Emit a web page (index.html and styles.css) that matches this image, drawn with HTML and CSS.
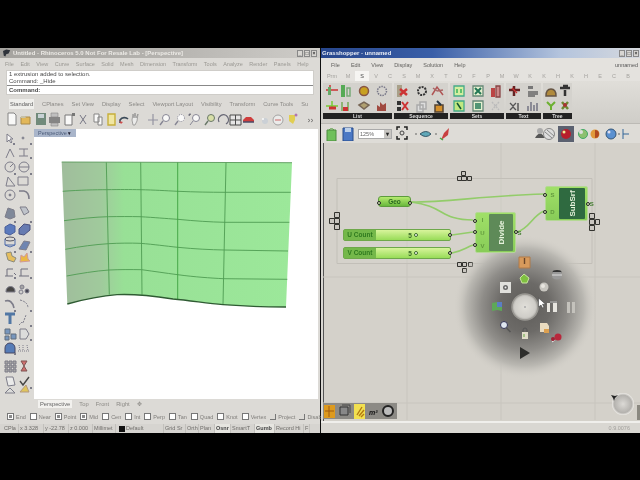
FILE: index.html
```html
<!DOCTYPE html>
<html lang="en">
<head>
<meta charset="utf-8">
<title>Rhinoceros and Grasshopper</title>
<link rel="stylesheet" href="styles.css">
</head>
<body>
<main class="desktop">
  <section class="rhino">
    <header class="rh-title">
      <svg class="rh-logo" viewBox="0 0 10 9"><path d="M0 2l4-2 5 1-2 4-3 1-1 3-2-1z" fill="#30343c"/></svg>
      <span>Untitled - Rhinoceros 5.0 Not For Resale Lab - [Perspective]</span>
      <span class="wbtns"><i>_</i><i>□</i><i>×</i></span>
    </header>
    <nav class="rh-menu">
      <span>File</span><span>Edit</span><span>View</span><span>Curve</span><span>Surface</span><span>Solid</span><span>Mesh</span><span>Dimension</span><span>Transform</span><span>Tools</span><span>Analyze</span><span>Render</span><span>Panels</span><span>Help</span>
    </nav>
    <div class="cmd">
      <div class="cmd-log">
        <div>1 extrusion added to selection.</div>
        <div>Command: _Hide</div>
      </div>
      <div class="cmd-line">Command:</div>
    </div>
    <div class="rh-tabs">
      <span class="on">Standard</span><span>CPlanes</span><span>Set View</span><span>Display</span><span>Select</span><span>Viewport Layout</span><span>Visibility</span><span>Transform</span><span>Curve Tools</span><span>Su</span>
    </div>
    <svg class="rh-tools" viewBox="0 0 320 19">
      <path d="M8 3h6l2 2v10H8z" fill="#fff" stroke="#777"/>
      <path d="M21 7h9v7h-9z" fill="#e4b244" stroke="#a07c30"/><path d="M21 6h4l1 2h-5z" fill="#c3bda0"/>
      <path d="M36 3h10v12H36z" fill="#5f7d6c"/><path d="M38 4h6v4h-6z" fill="#c4d0d4"/>
      <path d="M49 7h11v6H49z" fill="#777"/><path d="M51 3h7v4h-7zM51 13h7v3h-7z" fill="#bbb" stroke="#777" stroke-width=".6"/>
      <path d="M65 5h7v10h-7z" fill="#fff" stroke="#666"/><path d="M72 3h3v3h-3z" fill="#666"/>
      <path d="M80 5l6 9M86 5l-6 9" stroke="#667" fill="none"/>
      <path d="M94 4h5v8h-5zM98 7h4v8h-4z" fill="#fff" stroke="#777"/>
      <path d="M108 4h7v11h-7z" fill="#f4e99a" stroke="#c4a820" stroke-width="1.4"/>
      <path d="M120 13v-3c2-3 6-3 8-1" stroke="#234" stroke-width="1.6" fill="none"/><path d="M119 11l2 3 2-2z" fill="#c33"/>
      <path d="M132 10l1-6 1 4 1-5 1 5 2-4-1 7-2 4h-2z" fill="#eee" stroke="#777" stroke-width=".7"/>
      <path d="M153 4v11M148 10h10" stroke="#889" stroke-width="1.2"/>
      <circle cx="166" cy="8" r="3.5" fill="#fff" stroke="#778"/><path d="M163 11l-3 4" stroke="#778" stroke-width="1.4"/>
      <circle cx="181" cy="8" r="3.5" fill="#fff" stroke="#778" stroke-dasharray="1 1"/><path d="M178 11l-3 4" stroke="#778" stroke-width="1.4"/>
      <circle cx="196" cy="8" r="3.5" fill="#fff" stroke="#778"/><path d="M193 11l-3 4M191 4h-2v2" stroke="#778"/>
      <circle cx="211" cy="8" r="3.5" fill="#d8e0a0" stroke="#565"/><path d="M208 11l-3 4" stroke="#565" stroke-width="1.4"/>
      <path d="M219 12a5 5 0 1 1 7 2" stroke="#556" fill="none" stroke-width="1.3"/>
      <path d="M230 5h11v10h-11zM230 10h11M235.500 5v10" fill="#e8e8e8" stroke="#333"/>
      <path d="M243 10l3-3h5l3 3v2h-11z" fill="#c22"/><path d="M243 12h11" stroke="#335" stroke-width="1.500"/>
      <circle cx="265" cy="11" r="3" fill="#c9cfd6"/><circle cx="263" cy="9" r="1" fill="#fff"/>
      <circle cx="278" cy="10" r="5" fill="#eee" stroke="#999"/><path d="M275 10h6" stroke="#c55"/>
      <path d="M289 5h6v5l-2 4-4-3z" fill="#e2cc3c"/><circle cx="296" cy="5" r="1.500" fill="#a6a"/>
      <path d="M308 9l2 1.500-2 1.500M311 9l2 1.500-2 1.500" stroke="#444" fill="none" stroke-width=".7"/>
    </svg>
    <div class="rh-work">
      <svg class="rh-side" viewBox="0 0 34 270" aria-hidden="true">
        <g fill="none" stroke="#667" stroke-width="1">
          <path d="M7 5v8l2-2 2 3 1-1-2-3h3z" fill="#fff"/><circle cx="23" cy="9" r="1" fill="#889"/>
          <path d="M6 29l4-9 4 8" /><path d="M19 27h9M19 20h9M24 20v7"/>
          <circle cx="10" cy="38" r="5"/><path d="M10 38l3-3"/><circle cx="24" cy="38" r="5"/><path d="M19 38h10"/>
          <path d="M6 57l2-9 7 9z"/><path d="M18 48h10v8H18z"/>
          <circle cx="10" cy="66" r="5"/><circle cx="10" cy="66" r="1" fill="#667"/><path d="M19 62h5q5 1 5 8" stroke-width="1.600"/>
          <path d="M5 88l3-9 6 2 1 7-5 2z" fill="#68748a"/><path d="M20 78l6 0 3 5-5 3z" fill="#b8bec8"/>
          <path d="M5 98l5-3 5 2v6l-5 3-5-2z" fill="#3b63b8" stroke="#26408a"/><path d="M19 100l5-5 6 1v5l-6 5-5-1z" fill="#4a64a8" stroke="#26306a"/>
          <ellipse cx="10" cy="110" rx="5" ry="2" stroke="#334" /><path d="M5 110v6h10v-6M5 116l5 2 5-2" stroke="#2c50a0"/><path d="M19 120l5-8 6 1-4 8z" fill="#5570a8"/>
          <path d="M6 124l5-1 1 4 4 2-2 4-6-2z" fill="#e8b840" stroke="#776"/><path d="M20 133l1-7 3 2 3-4 1 6 2 2z" fill="#eeb020" stroke="#c88"/>
          <path d="M7 147v-7h6M5 147h8M14 144l2 2" stroke="#556"/><path d="M21 147v-7h7M19 147h10" stroke="#556"/>
          <path d="M6 162a4 4 0 0 1 9 0v1h-9z" fill="#222"/><circle cx="22" cy="158" r="2" fill="#999"/><circle cx="27" cy="162" r="2" fill="#223"/><circle cx="21" cy="163" r="2" fill="#ccc"/>
          <path d="M5 172q7-2 9 7" stroke-width="1.600"/><path d="M20 171q8 2 8 8" stroke-dasharray="2 1"/>
          <path d="M5 185h10M10 185v10" stroke="#2f5f98" stroke-width="3"/><path d="M19 196l3-3 1 1 3-8" stroke-dasharray="2 1"/>
          <path d="M5 200h5v5H5zM11 205h5v5h-5zM5 207h4v4H5z" fill="#5e86b8" stroke="#456"/><path d="M20 200h6l3 5-3 5h-6z" fill="#ddd"/>
          <path d="M5 219a5 5 0 0 1 10 0v5H5z" fill="#3565b0" stroke="#224"/><path d="M19 216l1 6M23 216v6M27 216l1 6M18 222h11" stroke-dasharray="1 1"/>
          <path d="M5 232h3v3H5zM9 232h3v3H9zM13 232h3v3h-3zM5 236h3v3H5zM9 236h3v3H9zM13 236h3v3h-3zM5 240h3v3H5zM9 240h3v3H9zM13 240h3v3h-3z" fill="#999"/><path d="M21 232h6l-6 10h6z" fill="#c55" stroke="#633"/>
          <path d="M6 248h7l2 8-7 1z" fill="#eee"/><path d="M20 252l3 4 6-8" stroke="#222" stroke-width="1.400"/>
          <path d="M5 264l5-5 5 5z" fill="#ddd"/><path d="M20 263l6-7 3 7z" fill="#e0c040" stroke="#a86"/>
        </g>
        <g fill="#667"><path d="M13 14h2v2h-2zM30 14h2v2h-2zM30 28h2v2h-2zM14 44h2v2h-2zM30 44h2v2h-2zM14 92h2v2h-2zM30 92h2v2h-2zM14 122h2v2h-2zM30 122h2v2h-2zM14 148h2v2h-2zM30 148h2v2h-2zM14 181h2v2h-2zM30 181h2v2h-2zM30 196h2v2h-2zM30 210h2v2h-2zM14 224h2v2h-2zM30 258h2v2h-2z"/></g>
      </svg>
      <div class="vp">
        <div class="vp-label">Perspective <b>▾</b></div>
        <svg class="surface" viewBox="34 127 284 270" aria-label="NURBS surface">
          <defs>
            <linearGradient id="sf" x1="0" x2="1" y1="0" y2="0">
              <stop offset="0" stop-color="#a0bd9c"/><stop offset=".17" stop-color="#a0ca9c"/><stop offset=".27" stop-color="#98e096"/><stop offset="1" stop-color="#9ce89a"/>
            </linearGradient>
          </defs>
          <path d="M61.700 160L292 160.700L286 305C258 305 240 304 223 302.700C205 301 190 298.500 173 297C150 293.500 130 292 117 292.700C100 294 82 298 67.300 302Z" fill="url(#sf)"/>
          <g fill="none" stroke="#4f9c52" stroke-width=".9">
            <path d="M62.700 189.300C80 188 95 187.700 106.700 187.700C120 187.500 130 187.500 140 187.700C155 188 165 188.700 177.700 189.300C195 190 210 190.300 225 190.300L290.700 190.300"/>
            <path d="M64 218.700C80 216.500 95 215 108.300 214.700C120 214.500 130 214.500 140 214.700C155 215.500 165 216.500 177.700 217.300C195 219 210 220 225 220.300L289.300 220.300"/>
            <path d="M65.300 247.300C80 244.500 95 242.500 108.300 241.700C120 241 130 241 140 241.300C155 242.500 165 244 177.700 245.300C195 247 210 247.700 224.300 248L288 249"/>
            <path d="M66.700 274C80 271.500 95 269 109 268C120 267.500 130 267.500 141.700 267.700C155 269.500 165 271 177.700 272.700C195 275 210 276 223.300 276.700L287.300 277.300"/>
            <path d="M106.300 160.300L109.300 292.500"/><path d="M140.700 160.300L142 292.700"/><path d="M177.700 160.300V297" stroke="#3da03f"/><path d="M226 160.500L223 302.700"/>
            <path d="M61.700 160L292 160.700" stroke="#5b9a5c"/>
          </g>
          <path d="M286 305C258 305 240 304 223 302.700C205 301 190 298.500 173 297C150 293.500 130 292 117 292.700C100 294 82 298 67.300 302" fill="none" stroke="#2f5b33" stroke-width="1.300"/>
        </svg>
      </div>
    </div>
    <div class="vp-tabs">
      <span class="on">Perspective</span><span>Top</span><span>Front</span><span>Right</span><span>✥</span>
    </div>
    <div class="osnap">
      <label class="ck on">End</label><label class="ck">Near</label><label class="ck on">Point</label><label class="ck on">Mid</label><label class="ck">Cen</label><label class="ck">Int</label><label class="ck">Perp</label><label class="ck">Tan</label><label class="ck">Quad</label><label class="ck">Knot</label><label class="ck">Vertex</label><label class="ck sk">Project</label><label class="ck sk">Disable</label>
    </div>
    <footer class="rh-status">
      <span class="c1">CPla</span><span class="c2">x 3.328</span><span class="c3">y -22.78</span><span class="c4">z 0.000</span><span class="c5">Millimet</span><span class="c6"><i></i>Default</span>
      <span class="c7">Grid Sr</span><span class="c8">Orth</span><span class="c9">Plan</span><span class="c10 act">Osnr</span><span class="c11">SmartT</span><span class="c12 act">Gumb</span><span class="c13">Record Hi</span><span class="c14">F</span>
    </footer>
  </section>

  <section class="gh">
    <header class="gh-title">
      <span>Grasshopper - unnamed</span>
      <span class="wbtns"><i>_</i><i>□</i><i>×</i></span>
    </header>
    <nav class="gh-menu">
      <span>File</span><span>Edit</span><span>View</span><span>Display</span><span>Solution</span><span>Help</span><em>unnamed</em>
    </nav>
    <div class="gh-tabs">
      <span>Prm</span><span>M</span><span class="on">S</span><span>V</span><span>C</span><span>S</span><span>M</span><span>X</span><span>T</span><span>D</span><span>F</span><span>P</span><span>M</span><span>W</span><span>K</span><span>K</span><span>H</span><span>K</span><span>H</span><span>E</span><span>C</span><span>B</span>
    </div>
    <div class="ribbon">
      <div class="rgroup g-list">
        <svg viewBox="0 0 69 30"><g stroke-width="1.500" fill="none">
          <path d="M3 7h12M7 2v10" stroke="#c33"/><path d="M5 4h3v8H5z" fill="#6a6"/><path d="M18 2h4v12h-4z" fill="#5a5"/><path d="M24 5h3v8h-3z" stroke="#7a7"/>
          <circle cx="41" cy="8" r="4.500" fill="#c8a020" stroke="#854"/><circle cx="59" cy="8" r="4.500" stroke="#778" stroke-dasharray="1.500 1"/>
          <path d="M3 23h12M9 18v6" stroke="#7c3"/><path d="M6 25h7" stroke="#c33" stroke-width="3"/><path d="M19 19v9M25 19v9" stroke="#7a5"/><path d="M20 24h5v4h-5z" fill="#c33"/>
          <path d="M36 22l5-3 5 3-5 4z" fill="#b0a070" stroke="#765"/><path d="M54 28v-6l3 2v-5l3 3 3-2v8z" fill="#a04a40"/>
        </g></svg>
        <div class="rlabel">List</div>
      </div>
      <div class="rgroup g-seq">
        <svg viewBox="0 0 54 30"><g stroke-width="1.500" fill="none">
          <path d="M3 2h5v12H3z" fill="#a8a088"/><path d="M6 6l7 6M13 6l-7 6" stroke="#c33" stroke-width="2.500"/>
          <circle cx="28" cy="8" r="4" stroke="#333" stroke-width="2" stroke-dasharray="2 1"/><path d="M38 12l5-8 6 8" stroke="#b05555"/><path d="M43 8l-4-3M43 8l6-1" stroke="#a66"/>
          <path d="M3 18h4v4H3zM3 24h4v4H3z" fill="#333"/><path d="M8 19l6 8M14 19l-6 8" stroke="#c33" stroke-width="2"/>
          <path d="M23 22h6v7h-6zM26 19h6v7h-6z" stroke="#aaa" fill="#ddd"/><path d="M41 22h8v7h-8z" fill="#d4902c" stroke="#543"/><path d="M43 18l4 4" stroke="#234" stroke-width="2"/>
        </g></svg>
        <div class="rlabel">Sequence</div>
      </div>
      <div class="rgroup g-sets">
        <svg viewBox="0 0 54 30"><g stroke-width="1.300" fill="none">
          <path d="M4 3h10v10H4z" fill="#d4eea0" stroke="#4a8"/><path d="M7 6v4M11 6v4" stroke="#2a5"/>
          <path d="M23 3h10v10H23z" fill="#e6f0d0" stroke="#687"/><path d="M25 5l6 6M31 5l-6 6" stroke="#275" stroke-width="2"/>
          <path d="M41 5h4v9h-4z" fill="#b44"/><path d="M46 3h4v11h-4z" fill="#c88" stroke="#844"/>
          <path d="M4 18h10v10H4z" fill="#c0e880" stroke="#4a8"/><path d="M7 20l4 6" stroke="#153" stroke-width="1.500"/>
          <path d="M23 18h10v10H23z" fill="#e6f0d0" stroke="#687"/><path d="M25 21h6M25 23h6M25 25h6" stroke="#275"/>
          <path d="M42 19l7 8M49 19l-7 8" stroke="#bbb" stroke-dasharray="2 1"/>
        </g></svg>
        <div class="rlabel">Sets</div>
      </div>
      <div class="rgroup g-text">
        <svg viewBox="0 0 35 30"><g stroke-width="1.300" fill="none">
          <path d="M8 3v10M3 7h11" stroke="#622" stroke-width="2.500"/><path d="M6 5l5 5" stroke="#c33"/>
          <path d="M22 3h5v3h-5z" fill="#777"/><path d="M22 9h10M22 11h10M22 13h7" stroke="#666"/>
          <path d="M4 20l3 3 3-3M4 27l3-3 3 3" stroke="#555"/><path d="M12 20v8" stroke="#444"/>
          <path d="M22 28v-5M25 28v-9M28 28v-6M31 28v-8" stroke="#667"/>
        </g></svg>
        <div class="rlabel">Text</div>
      </div>
      <div class="rgroup g-tree">
        <svg viewBox="0 0 29 30"><g stroke-width="1.500" fill="none">
          <path d="M3 13q0-7 5-7 5 0 5 7z" fill="#b08a3c" stroke="#654"/><path d="M17 5h10M20 3h5M22 7v6" stroke="#333" stroke-width="2.500"/>
          <path d="M8 27v-5M4 19l4 4 4-4" stroke="#6cb030" stroke-width="2"/><path d="M19 19l6 7M25 19l-6 7" stroke="#6a8a30" stroke-width="2.500"/><circle cx="22" cy="22" r="2" fill="#a33"/>
        </g></svg>
        <div class="rlabel">Tree</div>
      </div>
    </div>
    <div class="gh-tools">
      <svg class="t-left" viewBox="0 0 34 14"><path d="M1 3h9v11H1z" fill="#6fc05a" stroke="#4c8c3e"/><path d="M3 3a3 3 0 0 1 5 0" stroke="#5aa044" fill="none"/><path d="M17 1h10v13H17z" fill="#4b78c4" stroke="#284c8c"/><path d="M19 1h6v4h-6z" fill="#bcd0ea"/></svg>
      <div class="zoombox"><span>125%</span><b>▾</b></div>
      <svg class="t-mid" viewBox="0 0 60 16"><path d="M2 4V1h3M9 1h3v3M12 10v3H9M5 13H2v-3" stroke="#222" fill="none" stroke-width="1.500"/><circle cx="7" cy="7" r="2" stroke="#444" fill="none"/><circle cx="21" cy="8" r=".8" fill="#555"/><path d="M25 8q6-5 11 0-5 5-11 0z" fill="#60a8b8" stroke="#356"/><circle cx="41" cy="8" r=".8" fill="#555"/><path d="M46 14l3-7 5-5-1 7-4 3z" fill="#c84040"/><path d="M45 12l3 2" stroke="#4a4" stroke-width="1.500"/></svg>
      <svg class="t-right" viewBox="0 0 97 16"><path d="M2 12q5-9 10 0z" fill="#555"/><circle cx="7" cy="5" r="3" fill="#aaa"/><circle cx="16" cy="8" r="5.500" fill="#ddd" stroke="#888"/><path d="M12 6l7 6M14 4l7 6" stroke="#888"/><path d="M25 0h16v16H25z" fill="#5b6170"/><circle cx="33" cy="8" r="5" fill="#b81e2c"/><circle cx="31" cy="6" r="1.500" fill="#ee9"/><circle cx="50" cy="8" r="4.500" fill="#8cc070" stroke="#4a6"/><circle cx="48" cy="6" r="2" fill="#ddd"/><circle cx="62" cy="8" r="4.500" fill="#e09a3c"/><path d="M62 4a4 4 0 0 1 0 8z" fill="#b04a20"/><circle cx="78" cy="8" r="5" fill="#5a90d0" stroke="#357"/><circle cx="76" cy="6" r="1.500" fill="#dde"/><circle cx="86" cy="8" r=".8" fill="#555"/><path d="M90 3v10M90 8h6" stroke="#369"/></svg>
    </div>
    <div class="canvas">
      <svg class="layer" viewBox="323 143 317 277" aria-hidden="true">
        <defs>
          <radialGradient id="halo">
            <stop offset="0" stop-color="#5e5c59"/><stop offset=".35" stop-color="#6c6a67"/><stop offset=".6" stop-color="#8f8d89"/><stop offset=".82" stop-color="#bab8b2"/><stop offset="1" stop-color="#d4d1ca" stop-opacity="0"/>
          </radialGradient>
          <radialGradient id="disc"><stop offset="0" stop-color="#e2e0da"/><stop offset=".8" stop-color="#cfcdc8"/><stop offset="1" stop-color="#aaa8a3"/></radialGradient>
          <radialGradient id="dial"><stop offset="0" stop-color="#dcdad6"/><stop offset=".8" stop-color="#b4b2ae"/><stop offset="1" stop-color="#eeece8"/></radialGradient>
        </defs>
        <path d="M407 143V420M501 143V420M595 143V420M323 277H640M323 403H640" stroke="#c8c5be" fill="none"/>
        <path d="M337 178.500H592V263.500H337z" stroke="#c2bfb8" fill="#d8d5ce" fill-opacity=".4"/>
        <g fill="none" stroke="#8ccc60" stroke-width="1.700" opacity=".9">
          <path d="M411 202C450 202 480 196 544 194"/>
          <path d="M411 202C445 206 440 220 473 220"/>
          <path d="M452 235L473 232"/>
          <path d="M452 253C462 251 465 248 473 245"/>
          <path d="M517 232C530 228 532 216 544 211"/>
        </g>
        <g fill="#c9c6c0" stroke="#33332f" stroke-width="1">
          <path d="M461.500 171.500h4v4h-4zM457.500 176.500h4v4h-4zM461.500 176.500h5v4h-5zM467.500 176.500h4v4h-4z"/>
          <path d="M329.500 218.500h5v5h-5zM334.500 212.500h5v5h-5zM334.500 218.500h5v5h-5zM334.500 224.500h5v5h-5z"/>
          <path d="M589.500 213.500h5v5h-5zM589.500 219.500h5v5h-5zM589.500 225.500h5v5h-5zM595.500 219.500h4v5h-4z"/>
          <path d="M457.500 262.500h4v4h-4zM462.500 262.500h4v4h-4zM468.500 262.500h4v4h-4zM462.500 268.500h4v4h-4z"/>
        </g>
        <circle cx="525" cy="307" r="72" fill="url(#halo)"/>
        <circle cx="525" cy="307" r="13" fill="url(#disc)" stroke="#9a9893" stroke-width="1.500"/>
        <circle cx="525" cy="307" r="1" fill="#aaa"/>
        <path d="M519 257h11v11h-11z" fill="#d79a5c" stroke="#b07a48"/><path d="M524.500 258v6" stroke="#68452a" stroke-width="1.400"/>
        <path d="M520 278l4-4 5 4-2 5-5 0z" fill="#7fc040" stroke="#c8e4a0"/>
        <ellipse cx="557" cy="272" rx="4.500" ry="2" fill="#333"/><path d="M552.500 272v6q4.500 3 9 0v-6" fill="#999"/><path d="M552 275h10" stroke="#ddd"/>
        <circle cx="544" cy="287" r="4.500" fill="#c8c6c0"/><circle cx="543" cy="286" r="2" fill="#e8e6e0"/>
        <path d="M500 282h11v11h-11z" fill="#e0e0dc"/><circle cx="505.500" cy="287.500" r="2.500" fill="#666"/><circle cx="505.500" cy="287.500" r="1" fill="#eee"/>
        <path d="M492 303l5-1 5 2v7l-5-1-5 1z" fill="#5ea858"/><path d="M497 302h5v5h-5z" fill="#5b7ec4"/>
        <path d="M547 303h3v9h-3zM553 303h4v9h-4z" fill="#e8e6e0"/><path d="M550 302h7" stroke="#bbb"/>
        <path d="M567 302h3v11h-3zM572 302h3v11h-3z" fill="#c4c2bc"/>
        <path d="M538.500 298v9l2.500-2 1.500 3 1.500-.8-1.500-3h3z" fill="#fff" stroke="#333" stroke-width=".5"/>
        <circle cx="504" cy="325" r="3.500" fill="#dfe6ef" stroke="#335"/><path d="M506.500 328l4 4" stroke="#555" stroke-width="1.600"/>
        <path d="M522 332h6v7h-6z" fill="#e0dcc8"/><path d="M523 332v-2a2 2 0 0 1 4 0v2" stroke="#555" fill="none"/><path d="M524 334v3" stroke="#6a4"/>
        <path d="M540 323h7l2 3v6h-9z" fill="#eadcc0"/><path d="M544 329h5v4h-5z" fill="#dca050"/>
        <circle cx="558" cy="337" r="3.500" fill="#b8283c"/><path d="M555 340l-3 2" stroke="#eee"/><circle cx="553" cy="339" r="2" fill="#a02234"/>
        <path d="M520 347l10 6-10 6z" fill="#2e2e2c"/>
        <circle cx="623" cy="404" r="11" fill="url(#dial)"/><path d="M611 395l4 1 3-1-3 3-1 3-1-3z" fill="#222"/>
        <path d="M637 405h3v15h-3z" fill="#8a8880"/>
      </svg>
      <div class="node geo"><span class="pin pl"></span><b>Geo</b><span class="pin pr"></span></div>
      <div class="slider s-u"><b>U Count</b><span>5 <i></i></span><span class="pin pr"></span></div>
      <div class="slider s-v"><b>V Count</b><span>5 <i></i></span><span class="pin pr"></span></div>
      <div class="comp c-div">
        <div class="ports"><span>I</span><span>U</span><span>V</span></div>
        <div class="cname"><span>Divide</span></div>
        <div class="ports right"><span>S</span></div>
        <span class="pin p-i"></span><span class="pin p-u"></span><span class="pin p-v"></span><span class="pin p-s"></span>
      </div>
      <div class="comp c-sub">
        <div class="ports"><span>S</span><span>D</span></div>
        <div class="cname dark"><span>SubSrf</span></div>
        <div class="ports right"><span>S</span></div>
        <span class="pin p-a"></span><span class="pin p-b"></span><span class="pin p-s"></span>
      </div>
      <div class="widgets">
        <svg viewBox="0 0 73 16"><path d="M1 2h11v13H1z" fill="#dd9a1e"/><path d="M6 3v11M2 8h9" stroke="#a05a10"/><path d="M17 4h8v8h-8z" fill="#888" stroke="#333"/><path d="M19 2h8v8" fill="none" stroke="#444"/><path d="M31 1h11v15H31z" fill="#f2e050"/><path d="M34 12l5-8M36 13l5-6M38 14l3-3" stroke="#b47a10" stroke-width="1.400"/><text x="46" y="12" class="m2">m²</text><circle cx="65" cy="8" r="5" fill="#bbb" stroke="#222" stroke-width="2"/></svg>
      </div>
    </div>
    <footer class="gh-status"><span>0.9.0076</span></footer>
  </section>
</main>
</body>
</html>
```
FILE: styles.css
```css
* { box-sizing: border-box; }
html, body { margin: 0; height: 100%; background: #000; overflow: hidden; }
body { font-family: "Liberation Sans", Arial, sans-serif; color: #555; }
svg { display: block; }

.desktop {
  width: 640px;
  height: 385px;
  margin-top: 48px;
  display: flex;
  gap: 1px;
  background: #111;
  filter: blur(.6px);
}

/* Rhino window */
.rhino {
  width: 320px;
  flex: none;
  display: flex;
  flex-direction: column;
  background: #dcdad6;
}
.rh-title {
  height: 10px;
  flex: none;
  display: flex;
  align-items: center;
  gap: 2px;
  padding: 0 3px;
  background: linear-gradient(90deg, #a5a39f, #b4b2ae 50%, #cfcdc9);
  color: #eceae6;
  font-size: 6px;
  font-weight: bold;
  white-space: nowrap;
}
.rh-logo { width: 8px; height: 8px; }
.wbtns { margin-left: auto; display: flex; gap: 1px; }
.wbtns i {
  width: 6px;
  height: 7px;
  background: #d8d6d2;
  border: 1px solid #888;
  color: #333;
  font: bold 5px/5px "Liberation Sans", sans-serif;
  text-align: center;
}
.rh-menu {
  height: 12px;
  flex: none;
  display: flex;
  align-items: center;
  gap: 6.500px;
  padding: 0 5px;
  font-size: 5.500px;
  color: #9a9893;
  white-space: nowrap;
}
.cmd {
  height: 25px;
  flex: none;
  margin: 0 6px;
  background: #fff;
  font-size: 6px;
  color: #4a4a4a;
  border: 1px solid #cfcdc9;
}
.cmd-log { height: 14px; padding: 0 2px; line-height: 7px; }
.cmd-line { height: 9px; padding: 0 2px; line-height: 9px; border-top: 1px solid #888; font-weight: bold; }
.rh-tabs {
  height: 13px;
  flex: none;
  margin-top: 2px;
  display: flex;
  align-items: center;
  gap: 8px;
  padding: 0 9px;
  font-size: 5.700px;
  color: #8b8986;
  white-space: nowrap;
  overflow: hidden;
}
.rh-tabs .on { color: #5d5d5d; background: #efefec; padding: 2px 1px; }
.rh-tools { width: 320px; height: 19px; flex: none; opacity: .85; }
.rh-work { flex: 1; min-height: 0; display: flex; }
.rh-side { width: 34px; height: 270px; flex: none; opacity: .8; }
.vp { width: 284px; height: 270px; flex: none; background: #fff; position: relative; }
.vp-label {
  position: absolute;
  left: 0;
  top: 0;
  width: 42px;
  height: 8px;
  background: #a9b5ca;
  color: #4a5a78;
  font-size: 5.500px;
  line-height: 8px;
  padding-left: 4px;
  white-space: nowrap;
}
.vp-label b { color: #223; font-size: 5px; }
.surface { width: 284px; height: 270px; }
.vp-tabs {
  height: 11px;
  flex: none;
  display: flex;
  align-items: center;
  gap: 7px;
  padding-left: 38px;
  font-size: 5.800px;
  color: #8c8a86;
}
.vp-tabs .on { background: #f2f1ee; color: #666; padding: 1px 2px; }
.osnap {
  height: 15px;
  flex: none;
  display: flex;
  align-items: center;
  gap: 4px;
  padding-left: 7px;
  font-size: 5.500px;
  color: #7f7d7a;
  white-space: nowrap;
}
.ck { display: flex; align-items: center; gap: 2px; }
.ck::before {
  content: "";
  width: 5px;
  height: 5px;
  background: #fff;
  border: 1px solid #777;
}
.ck.on::before { background: #8a8a8a; box-shadow: inset 0 0 0 1px #fff; }
.ck.sk::before { background: transparent; border-width: 0 1px 1px 0; }
.rh-status {
  height: 9px;
  flex: none;
  display: flex;
  font-size: 5.500px;
  line-height: 9px;
  color: #6f6d6a;
  white-space: nowrap;
  padding-left: 3px;
  background: #d6d4d0;
}
.rh-status span { flex: none; padding-left: 1px; border-right: 1px solid #c2c0bc; }
.c1 { width: 16px; } .c2 { width: 25px; } .c3 { width: 25px; } .c4 { width: 24px; } .c5 { width: 23px; }
.c6 { width: 48px; display: flex; align-items: center; gap: 1px; }
.c6 i { width: 6px; height: 6px; background: #111; margin-left: 2px; }
.c7 { width: 22px; } .c8 { width: 13px; } .c9 { width: 16px; } .c10 { width: 16px; } .c11 { width: 24px; } .c12 { width: 20px; } .c13 { width: 29px; } .c14 { width: 6px; }
.rh-status .act { background: #e6e5e0; color: #444; font-weight: bold; }

/* Grasshopper window */
.gh {
  flex: 1;
  min-width: 0;
  display: flex;
  flex-direction: column;
  background: #d9d7d2;
}
.gh-title {
  height: 10px;
  flex: none;
  display: flex;
  align-items: center;
  padding: 0 1px;
  background: linear-gradient(90deg, #27468c, #3a5fa8 35%, #b4c4dd 75%, #d6d9de);
  color: #e8ecf4;
  font-size: 6px;
  font-weight: bold;
}
.gh-menu {
  height: 13px;
  flex: none;
  display: flex;
  align-items: center;
  gap: 11px;
  padding-left: 10px;
  font-size: 5.500px;
  color: #5f5e5b;
  background: #e4e2de;
}
.gh-menu em { margin-left: auto; font-style: normal; padding-right: 2px; white-space: nowrap; color: #555; }
.gh-tabs {
  height: 10px;
  flex: none;
  display: flex;
  padding-left: 2px;
  font-size: 5.500px;
  line-height: 10px;
  color: #a5a39f;
  background: #e4e2de;
  overflow: hidden;
}
.gh-tabs span { width: 14px; flex: none; text-align: center; }
.gh-tabs span:first-child { width: 18px; }
.gh-tabs .on { background: #f6f5f2; color: #444; }
.ribbon {
  height: 42px;
  flex: none;
  display: flex;
  gap: 2px;
  padding: 2px 0 0 2px;
  background: linear-gradient(#e0ded9, #cfcdc8);
}
.rgroup {
  height: 36px;
  background: #d4d2cd;
  display: flex;
  flex-direction: column;
  justify-content: flex-end;
}
.rgroup svg { width: 100%; height: 30px; flex: none; }
.g-list { width: 69px; } .g-seq, .g-sets { width: 54px; } .g-text { width: 35px; } .g-tree { width: 29px; }
.rlabel {
  height: 6px;
  flex: none;
  background: #222;
  color: #ddd;
  font-size: 5px;
  line-height: 6px;
  font-weight: bold;
  text-align: center;
}
.gh-tools {
  height: 20px;
  flex: none;
  display: flex;
  align-items: center;
  padding-left: 5px;
  border-top: 1px solid #bcbab5;
  background: #dedcd7;
}
.t-left { width: 34px; height: 14px; }
.zoombox {
  width: 34px;
  height: 10px;
  margin-left: -2px;
  background: #fff;
  border: 1px solid #aaa;
  display: flex;
  justify-content: space-between;
  font-size: 5.500px;
  line-height: 8px;
  padding-left: 1px;
  color: #666;
}
.zoombox b { width: 7px; background: #c8c6c2; color: #222; text-align: center; }
.t-mid { width: 60px; height: 16px; margin-left: 3px; }
.t-right { width: 97px; height: 16px; margin-left: auto; margin-right: 10px; }
.canvas {
  flex: 1;
  min-height: 0;
  position: relative;
  margin-left: 2px;
  border-left: 1px solid #555;
  background: #d4d1ca;
}
.layer { position: absolute; left: -1px; top: 0; width: 317px; height: 277px; }
.pin {
  position: absolute;
  width: 4px;
  height: 4px;
  border-radius: 50%;
  background: #cfe8b0;
  border: 1px solid #222;
}
.pl { left: -2px; top: 4px; }
.pr { right: -2px; top: 4px; }
.node, .slider, .comp { position: absolute; color: #2d6b22; }
.node {
  left: 54px;
  top: 53px;
  width: 33px;
  height: 11px;
  border-radius: 3px;
  background: linear-gradient(#b6ea70, #68b83c);
  border: 1px solid #5c9c3c;
  text-align: center;
  font-size: 6.500px;
  line-height: 9px;
}
.slider {
  left: 19px;
  width: 108px;
  height: 12px;
  border-radius: 2px;
  background: linear-gradient(#d8f49c, #98dc58);
  border: 1px solid #6ea84a;
  display: flex;
  align-items: center;
  font-size: 6.500px;
}
.s-u { top: 86px; }
.s-v { top: 104px; }
.slider b { width: 32px; height: 100%; background: #74b84a; text-align: center; line-height: 10px; color: #2f7a1f; }
.slider span:not(.pin) { flex: 1; display: flex; align-items: center; justify-content: center; gap: 2px; color: #3a6a28; font-weight: bold; }
.slider i { width: 4px; height: 4px; border-radius: 50%; border: 1px solid #3a6a28; background: #fff; }
.slider .pin { top: 3px; }
.comp {
  display: flex;
  border-radius: 2px;
  background: linear-gradient(#a0e068, #88cc58);
  border: 1px solid #b4d894;
  font-size: 6px;
  font-weight: bold;
}
.c-div { left: 151px; top: 69px; width: 41px; height: 41px; }
.c-sub { left: 221px; top: 43px; width: 43px; height: 35px; }
.ports {
  width: 13px;
  flex: none;
  display: flex;
  flex-direction: column;
  justify-content: space-around;
  text-align: center;
  color: #629a3e;
}
.ports.right { color: #3f7a2c; }
.cname {
  flex: 1;
  margin: 1px 0;
  background: #5e8a58;
  color: #e6f2dc;
  display: flex;
  align-items: center;
  justify-content: center;
  border-radius: 1px;
}
.cname.dark { background: #2f6a40; }
.cname span { transform: rotate(-90deg); font-size: 8px; white-space: nowrap; }
.p-i { left: -3px; top: 6px; } .p-u { left: -3px; top: 17px; } .p-v { left: -3px; top: 30px; } .c-div .p-s { right: -3px; top: 17px; }
.p-a { left: -3px; top: 6px; } .p-b { left: -3px; top: 23px; } .c-sub .p-s { right: -3px; top: 15px; }
.widgets {
  position: absolute;
  left: -1px;
  top: 260px;
  width: 74px;
  height: 16px;
  background: #8c8a85;
}
.widgets svg { width: 73px; height: 16px; }
.m2 { font: italic bold 7px "Liberation Sans", sans-serif; fill: #111; }
.gh-status {
  height: 12px;
  flex: none;
  display: flex;
  justify-content: flex-end;
  align-items: center;
  padding-right: 10px;
  border-top: 2px solid #f0efec;
  font-size: 5.500px;
  color: #a3a19d;
  background: #d9d7d2;
}
```
